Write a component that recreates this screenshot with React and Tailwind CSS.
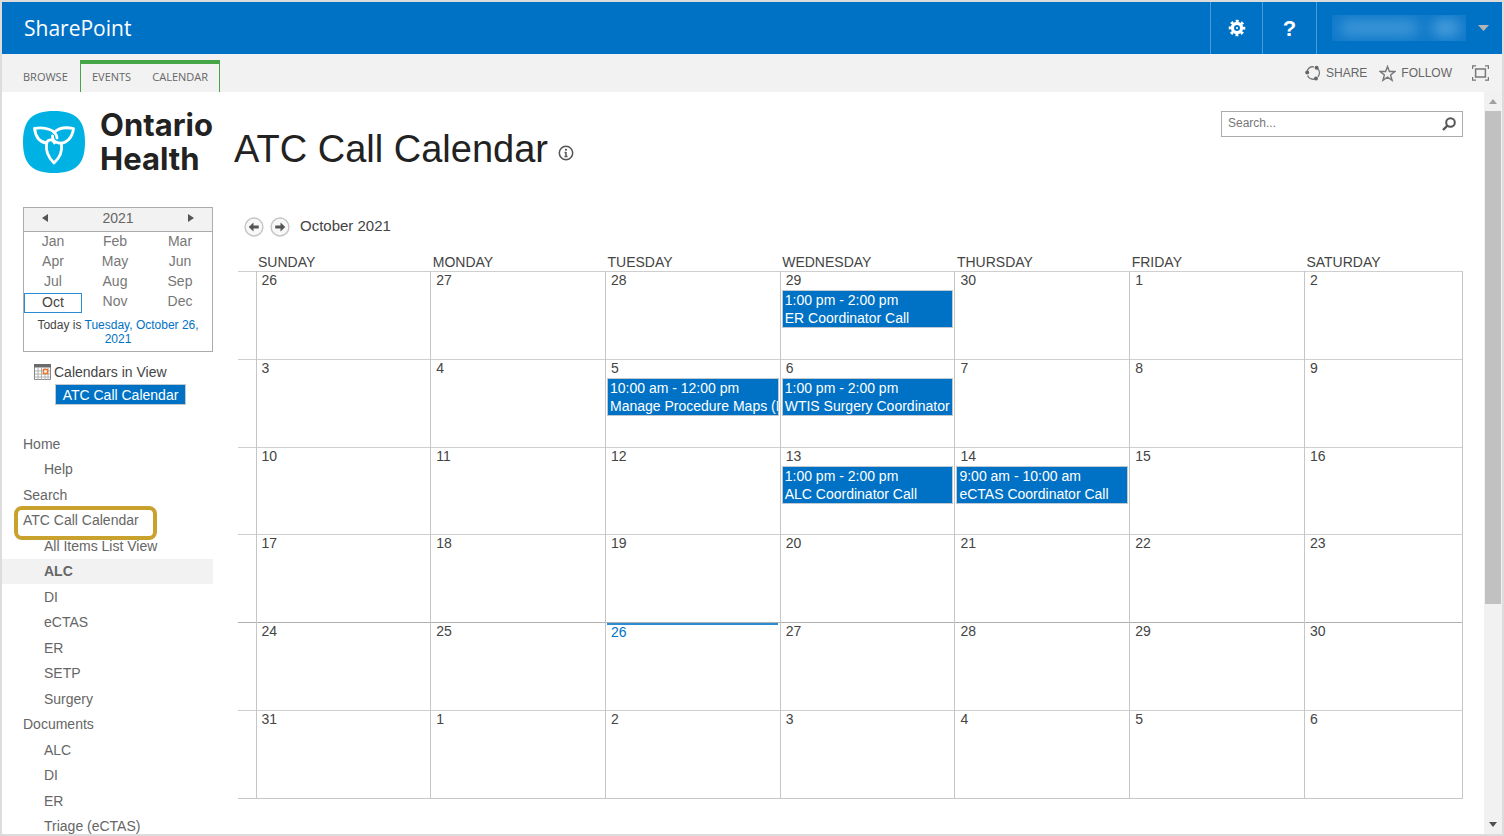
import React, { useState } from 'react';

const MONTHS = [
  ['Jan', 'Feb', 'Mar'],
  ['Apr', 'May', 'Jun'],
  ['Jul', 'Aug', 'Sep'],
  ['Oct', 'Nov', 'Dec'],
];

const DAYS = ['Sunday', 'Monday', 'Tuesday', 'Wednesday', 'Thursday', 'Friday', 'Saturday'];

const WEEKS = [
  [26, 27, 28, 29, 30, 1, 2],
  [3, 4, 5, 6, 7, 8, 9],
  [10, 11, 12, 13, 14, 15, 16],
  [17, 18, 19, 20, 21, 22, 23],
  [24, 25, 26, 27, 28, 29, 30],
  [31, 1, 2, 3, 4, 5, 6],
];

// keyed by week index - day index
const EVENTS = {
  '0-3': { time: '1:00 pm - 2:00 pm', title: 'ER Coordinator Call' },
  '1-2': { time: '10:00 am - 12:00 pm', title: 'Manage Procedure Maps (M' },
  '1-3': { time: '1:00 pm - 2:00 pm', title: 'WTIS Surgery Coordinator C' },
  '2-3': { time: '1:00 pm - 2:00 pm', title: 'ALC Coordinator Call' },
  '2-4': { time: '9:00 am - 10:00 am', title: 'eCTAS Coordinator Call' },
};

const TODAY = '4-2';

const NAV = [
  { label: 'Home' },
  { label: 'Help', sub: true },
  { label: 'Search' },
  { label: 'ATC Call Calendar', marked: true },
  { label: 'All Items List View', sub: true },
  { label: 'ALC', sub: true, active: true },
  { label: 'DI', sub: true },
  { label: 'eCTAS', sub: true },
  { label: 'ER', sub: true },
  { label: 'SETP', sub: true },
  { label: 'Surgery', sub: true },
  { label: 'Documents' },
  { label: 'ALC', sub: true },
  { label: 'DI', sub: true },
  { label: 'ER', sub: true },
  { label: 'Triage (eCTAS)', sub: true },
];

const GearIcon = () => (
  <svg width="18" height="18" viewBox="0 0 18 18" fill="none" stroke="#fff">
    <circle cx="9" cy="9" r="4.6" strokeWidth="3.2" />
    <circle cx="9" cy="9" r="7" strokeWidth="2.6" strokeDasharray="2.9 2.598" strokeDashoffset="1.45" />
    <circle cx="9" cy="9" r="1" fill="#fff" stroke="none" />
  </svg>
);

const ShareIcon = () => (
  <svg width="16" height="16" viewBox="0 0 16 16" fill="none" stroke="#777" strokeWidth="1.4">
    <path d="M2.2 6A6.2 6.2 0 0 1 9 1.9M12.6 3.6A6.2 6.2 0 0 1 13 11.8M10 13.9A6.2 6.2 0 0 1 2.6 10.6" />
    <g fill="#666" stroke="none">
      <circle cx="2.2" cy="7.5" r="2" />
      <circle cx="11.6" cy="2.8" r="2" />
      <circle cx="11" cy="13.4" r="2" />
    </g>
  </svg>
);

const StarIcon = () => (
  <svg width="17" height="17" viewBox="0 0 17 17" fill="none" stroke="#777" strokeWidth="1.4">
    <path d="M8.5 1.6l1.9 4.9h5.4l-4.2 3.4 1.5 5.4-4.6-3.2-4.6 3.2 1.5-5.4L1.2 6.5h5.4z" />
  </svg>
);

const FocusIcon = () => (
  <svg width="17" height="16" viewBox="0 0 17 16" fill="none" stroke="#777" strokeWidth="1.2">
    <rect x="3.6" y="4" width="9.8" height="8" strokeWidth="1.5" />
    <path d="M.6 4V.8H4M13 .8h3.4V4M16.4 12v3.2H13M4 15.2H.6V12" />
  </svg>
);

// trillium: three petals whose ends wrap round each other in the middle
const LogoMark = () => (
  <svg width="62" height="62" viewBox="0 0 62 62">
    <path d="M31 0C53 0 62 9 62 31S53 62 31 62 0 53 0 31 9 0 31 0z" fill="#00b2e3" />
    <g fill="none" stroke="#fff" strokeWidth="2.8" strokeLinejoin="round" strokeLinecap="round">
      <path d="M34 27C33.5 19 22 15.500 11.500 17.500C12.500 25 16 31 23.500 32" />
      <path d="M31 21.500C36 16.500 43 16 50.500 17.500C49.500 26 44 33 36 32C32 31.500 29 29 29.500 25" />
      <path d="M31.500 32C30 28 24 27.500 23.500 33C22.500 40 25.500 46.500 31 52C37 46.500 39.500 40 38.500 33" />
    </g>
  </svg>
);

const InfoIcon = () => (
  <svg width="16" height="16" viewBox="0 0 16 16" fill="none" stroke="#555" strokeWidth="1.5">
    <circle cx="8" cy="8" r="6.7" />
    <path d="M8 7v4.5M6.500 7.500H8M6.500 11.500h3" />
    <circle cx="8" cy="4.7" r="1" fill="#444" stroke="none" />
  </svg>
);

const CalendarIcon = () => (
  <svg width="17" height="16" viewBox="0 0 17 16">
    <path d="M.5.5h16v15H.5z" fill="#fff" stroke="#888" />
    <path d="M0 0h17v3.500H0z" fill="#6b6b6b" />
    <path d="M4 4v12M7.500 4v12M11 4v12M14 4v12M1 7h15M1 10h15M1 13h15" stroke="#b0b0b0" />
    <rect x="9.500" y="5.500" width="4" height="4" fill="#fff" stroke="#e8762d" strokeWidth="1.5" />
  </svg>
);

const ArrowIcon = ({ flip }) => (
  <svg width="20" height="20" viewBox="0 0 19 19" className={flip ? '-scale-x-100' : ''}>
    <circle cx="9.5" cy="9.5" r="8.5" fill="#f8f8f8" stroke="#c4c4c4" strokeWidth="1.3" />
    <path d="M4.500 9.500L9 5.300v2.800h5v2.800H9v2.800z" fill="#555" />
  </svg>
);

const TopBar = () => (
  <header className="flex h-[52px] shrink-0 items-stretch bg-[#0072c6] text-white">
    <a href="#" className="flex flex-1 items-center pt-[2px] pl-[22px] font-['Open_Sans',sans-serif] text-[21px]">SharePoint</a>
    <button aria-label="Settings" className="flex w-[52px] items-center justify-center border-l border-[#4a9bd8]">
      <GearIcon />
    </button>
    <button aria-label="Help" className="flex w-[54px] items-center justify-center border-l border-[#4a9bd8]">
      <span className="text-[22px] font-bold">?</span>
    </button>
    <button aria-label="Account" className="flex w-[186px] items-center justify-between border-l border-[#4a9bd8] pr-[13px] pl-[15px]">
      <span className="flex h-[26px] w-[134px] items-center justify-around overflow-hidden bg-[#0f79c9]">
        <span className="h-4 w-20 rounded-full bg-[#3f97d8] blur-[7px]" />
        <span className="h-4 w-7 rounded-full bg-[#4fa1dd] blur-[7px]" />
      </span>
      <svg width="11" height="6" viewBox="0 0 11 6"><path d="M0 0h11L5.500 6z" fill="#b4b4b4" /></svg>
    </button>
  </header>
);

const Ribbon = () => (
  <div className="flex h-[38px] shrink-0 items-end justify-between bg-[#f2f2f2] pr-[13px] text-[#666]">
    <nav className="flex items-end font-['Open_Sans',sans-serif] text-[11px]">
      <a href="#" className="flex h-[30px] w-[78px] items-center pl-[21px]">BROWSE</a>
      <div className="flex h-8 w-[140px] items-center justify-between border-x border-t-4 border-[#46a546] px-[11px] pb-[2px]">
        <a href="#">EVENTS</a>
        <a href="#">CALENDAR</a>
      </div>
    </nav>
    <div className="flex h-[38px] items-center text-xs">
      <button className="flex items-center gap-[5px]"><ShareIcon />SHARE</button>
      <button className="ml-3 flex items-center gap-[5px]"><StarIcon />FOLLOW</button>
      <button aria-label="Focus on content" className="ml-5"><FocusIcon /></button>
    </div>
  </div>
);

const DatePicker = () => (
  <div className="ml-[21px] border border-[#ababab] text-sm text-[#777]">
    <div className="flex h-6 items-center justify-between border-b border-[#ababab] bg-[#f2f2f2] px-[18px] pb-[3px] text-[#666]">
      <button aria-label="Previous year">
        <svg width="6" height="8" viewBox="0 0 6 8"><path d="M6 0v8L0 4z" fill="#555" /></svg>
      </button>
      <span>2021</span>
      <button aria-label="Next year">
        <svg width="6" height="8" viewBox="0 0 6 8"><path d="M0 0v8l6-4z" fill="#555" /></svg>
      </button>
    </div>
    <div className="grid h-[81px] auto-rows-fr grid-cols-[58px_1fr_64px] text-center leading-4">
      {MONTHS.flat().map((m) => (
        <button
          key={m}
          className={m === 'Oct' ? 'border border-[#2a8dd4] pb-[2px] text-[#444]' : 'pb-[3px]'}
        >
          {m}
        </button>
      ))}
    </div>
    <p className="px-2 pt-[5px] pb-[5px] text-center text-xs leading-[14px] text-[#444]">
      Today is <a href="#" className="text-[#0072c6]">Tuesday, October 26, 2021</a>
    </p>
  </div>
);

const SideNav = () => (
  <ul className="mt-[26px] grid h-[408px] auto-rows-fr text-sm text-[#666]">
    {NAV.map((item, i) => (
      <li key={i} className={`relative flex items-center ${item.sub ? 'pl-[42px]' : 'pl-[21px]'} ${item.active ? 'bg-[#f2f2f2] font-bold' : ''}`}>
        <a href="#">{item.label}</a>
        {item.marked && (
          <span className="absolute -top-[2px] left-3 h-[34px] w-[143px] rounded-lg border-4 border-[#c9a22e]" />
        )}
      </li>
    ))}
  </ul>
);

const MonthView = () => (
  <table className="h-[545px] w-full table-fixed border-collapse text-sm text-[#444]">
    <colgroup>
      <col className="w-[18px]" />
      {DAYS.slice(0, 6).map((d) => (
        <col key={d} className="w-[14.27%]" />
      ))}
      <col />
    </colgroup>
    <thead>
      <tr className="h-[18px]">
        <td />
        {DAYS.map((d) => (
          <th key={d} className="p-0 pl-[2px] text-left leading-[18px] font-normal uppercase">{d}</th>
        ))}
      </tr>
    </thead>
    <tbody>
      {WEEKS.map((week, w) => (
        <tr key={w} className={w === 4 ? 'h-[87px] border-t border-[#b0b0b0]' : 'h-[87px] border-t border-[#cfcfcf]'}>
          <td />
          {week.map((day, d) => {
            const key = `${w}-${d}`;
            const event = EVENTS[key];
            return (
              <td key={d} className="border-x border-[#c6c6c6] p-0 align-top">
                <div className={`mr-[2px] ml-px h-[18px] pl-1 ${key === TODAY ? 'border-t-2 border-[#2a8dd4] leading-[15px] text-[#0072c6]' : 'leading-[17px]'}`}>
                  {day}
                </div>
                {event && (
                  <a href="#" className="mx-px block overflow-hidden border border-[#c0c8d0] bg-[#0072c6] pl-[2px] leading-[18px] whitespace-nowrap text-white">
                    {event.time}
                    <br />
                    {event.title}
                  </a>
                )}
              </td>
            );
          })}
        </tr>
      ))}
    </tbody>
    <tfoot>
      <tr className="border-t border-[#c6c6c6]" />
    </tfoot>
  </table>
);

const ScrollBar = () => (
  <div className="flex w-[18px] shrink-0 flex-col bg-[#f1f1f1] px-px">
    <button aria-label="Scroll up" className="flex h-[19px] shrink-0 items-center justify-center">
      <svg width="8" height="5" viewBox="0 0 8 5"><path d="M0 5h8L4 0z" fill="#a0a0a0" /></svg>
    </button>
    <div className="min-h-0 flex-1">
      <div className="h-[70%] bg-[#c1c1c1]" />
    </div>
    <button aria-label="Scroll down" className="flex h-[19px] shrink-0 items-center justify-center">
      <svg width="8" height="5" viewBox="0 0 8 5"><path d="M0 0h8L4 5z" fill="#505050" /></svg>
    </button>
  </div>
);

const App = () => {
  const [query, setQuery] = useState('');

  return (
    <div className="flex h-screen flex-col overflow-hidden border-2 border-[#dcdcdc] bg-white font-['Liberation_Sans',Arial,sans-serif]">
      <TopBar />
      <Ribbon />
      <div className="flex min-h-0 flex-1">
        <div className="min-w-0 flex-1 overflow-hidden">
          <div className="flex h-[115px] items-start pt-[19px] pr-[21px] pl-[21px]">
            <a href="#" className="flex w-[211px] shrink-0 items-center gap-[15px]">
              <LogoMark />
              <span className="-my-1 font-[Inter,sans-serif] text-[31px] leading-[34px] font-bold text-[#222]">Ontario<br />Health</span>
            </a>
            <h1 className="flex flex-1 items-center gap-[10px] pt-4 text-[38px] leading-[44px] text-[#222]">
              ATC Call Calendar
              <span className="pt-2"><InfoIcon /></span>
            </h1>
            <form className="flex h-[26px] w-[242px] items-center border border-[#ababab] pr-[6px] pl-[6px]">
              <input
                aria-label="Search"
                placeholder="Search..."
                value={query}
                onChange={(e) => setQuery(e.target.value)}
                className="min-w-0 flex-1 pb-[2px] text-xs text-[#444] outline-none placeholder:text-[#777]"
              />
              <button type="button" aria-label="Run search">
                <svg width="14" height="14" viewBox="0 0 14 14" fill="none" stroke="#555">
                  <circle cx="8.5" cy="5.5" r="4.3" strokeWidth="2" />
                  <path d="M5.500 8.500L1 13" strokeWidth="2.4" />
                </svg>
              </button>
            </form>
          </div>
          <div className="flex">
            <aside className="w-[211px] shrink-0">
              <DatePicker />
              <div className="mt-[10px] ml-8 flex items-center gap-[3px] text-sm leading-5 text-[#444]">
                <CalendarIcon />
                Calendars in View
              </div>
              <a href="#" className="mt-[2px] ml-[53px] block h-[21px] w-[131px] border border-[#c0c8d0] bg-[#0072c6] text-center text-sm leading-5 text-white">ATC Call Calendar</a>
              <SideNav />
            </aside>
            <main className="min-w-0 flex-1 pr-[21px] pl-[25px]">
              <div className="flex h-[46px] items-start gap-[6px] pt-[10px] pl-[6px] text-[#444]">
                <button aria-label="Previous month"><ArrowIcon /></button>
                <button aria-label="Next month"><ArrowIcon flip /></button>
                <span className="pl-1 text-[15px] leading-[18px]">October 2021</span>
              </div>
              <MonthView />
            </main>
          </div>
        </div>
        <ScrollBar />
      </div>
    </div>
  );
};

export default App;
